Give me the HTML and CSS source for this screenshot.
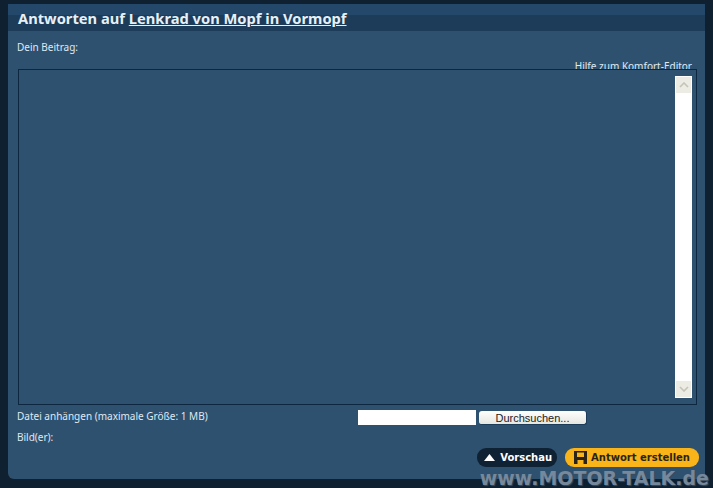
FILE: index.html
```html
<!DOCTYPE html>
<html lang="de">
<head>
  <meta charset="UTF-8">
  <title>Antworten</title>
  <link rel="stylesheet" href="styles.css">
</head>
<body>
  <div class="panel">
    <h1 class="panel-title">Antworten auf <a href="#">Lenkrad von Mopf in Vormopf</a></h1>
    <div class="panel-body">
      <div class="label">Dein Beitrag:</div>
      <div class="help-row"><a href="#">Hilfe zum Komfort-Editor</a></div>
      <div class="editor">
        <div class="scrollbar">
          <div class="scroll-btn">
            <svg width="10" height="6" viewBox="0 0 10 6"><path d="M1 5 L5 1 L9 5" fill="none" stroke="#c4c4b8" stroke-width="1.6"/></svg>
          </div>
          <div class="scroll-btn">
            <svg width="10" height="6" viewBox="0 0 10 6"><path d="M1 1 L5 5 L9 1" fill="none" stroke="#c4c4b8" stroke-width="1.6"/></svg>
          </div>
        </div>
      </div>
      <div class="upload-row">
        <span>Datei anhängen (maximale Größe: 1 MB)</span>
        <div class="file-picker">
          <div class="file-input"></div>
          <div class="file-btn">Durchsuchen...</div>
        </div>
      </div>
      <div class="label images">Bild(er):</div>
      <div class="actions">
        <a class="btn btn-dark" href="#">
          <svg width="11" height="7" viewBox="0 0 11 7"><path d="M5.5 0 L11 7 H0 Z" fill="#fff"/></svg>
          Vorschau
        </a>
        <a class="btn btn-yellow" href="#">
          <svg width="13" height="13" viewBox="0 0 13 13"><path d="M0 0 H13 V13 H0 Z M3 1.5 V6 H10 V1.5 Z M3.5 9 V13 H9.5 V9 Z" fill="#2a2418" fill-rule="evenodd"/></svg>
          Antwort erstellen
        </a>
      </div>
    </div>
  </div>
  <div class="watermark">www.MOTOR-TALK.de</div>
</body>
</html>
```

FILE: styles.css
```css
body, html {
  margin: 0;
  padding: 0;
  height: 100%;
}

body {
  background-color: #0f2031;
  font-family: "Noto Sans", sans-serif;
  font-size: 10px;
  color: #dfe9f2;
  overflow: hidden;
  padding: 4px 8px 9px 8px;
  box-sizing: border-box;
  position: relative;
}

.panel {
  height: 100%;
  background-color: #2f5170;
  border-radius: 0 0 0 6px;
  display: flex;
  flex-direction: column;
}

/* Title bar */
.panel-title {
  margin: 0;
  height: 27px;
  box-sizing: border-box;
  padding: 6px 0 0 10px;
  background: linear-gradient(#24486a 0%, #24486a 40%, #1c3c59 42%, #1c3c59 100%);
  font-family: "Noto Sans", sans-serif;
  font-size: 14.7px;
  line-height: 16px;
  font-weight: bold;
  color: #e6f0f8;
}

.panel-title a {
  color: #e6f0f8;
}

.panel-body {
  flex: 1;
  display: flex;
  flex-direction: column;
  padding: 10px 8px 0 9px;
}

.label {
  line-height: 13px;
}

.help-row {
  text-align: right;
  margin-top: 6px;
  height: 9px;
  line-height: 13px;
  padding-right: 5px;
}

.help-row a {
  color: #dfe9f2;
  text-decoration: none;
}

/* Editor */
.editor {
  position: relative;
  height: 322px;
  margin-left: 1px;
  background-color: #2f5170;
  border: 1px solid #0e2740;
  display: flex;
  justify-content: flex-end;
  padding: 6px 4px;
}

.scrollbar {
  width: 17px;
  background-color: #fff;
  display: flex;
  flex-direction: column;
  justify-content: space-between;
}

.scroll-btn {
  height: 16px;
  background-color: #ecebe4;
  display: flex;
  align-items: center;
  justify-content: center;
  margin: 1px;
}

.upload-row {
  display: flex;
  justify-content: space-between;
  line-height: 13px;
  margin-top: 5px;
}

.file-picker {
  display: flex;
  gap: 3px;
  margin-right: 110px;
}

.file-input {
  width: 118px;
  height: 15px;
  background-color: #fff;
}

.file-btn {
  width: 107px;
  height: 13px;
  margin-top: 1px;
  background: linear-gradient(#fff, #e6e6e0);
  border-right: 1px solid #1c3c59;
  border-bottom: 1px solid #1c3c59;
  border-radius: 3px;
  font-family: "Liberation Sans", sans-serif;
  font-size: 11px;
  color: #222;
  text-align: center;
  line-height: 14px;
}

.images {
  margin-top: 6px;
}

/* Buttons */
.actions {
  display: flex;
  justify-content: flex-end;
  gap: 8px;
  margin: 4px -2px 0 0;
}

.btn {
  display: flex;
  align-items: center;
  height: 19px;
  border-radius: 9px;
  font-family: "DejaVu Sans", sans-serif;
  font-size: 10px;
  font-weight: bold;
  text-decoration: none;
}

.btn-dark {
  gap: 5px;
  background-color: #0f2234;
  color: #fff;
  padding: 0 5px 0 7px;
}

.btn-yellow {
  gap: 4px;
  background-color: #f8b418;
  color: #2a2418;
  padding: 0 9px;
}

/* Watermark over the corner of the shot */
.watermark {
  position: absolute;
  right: 4px;
  bottom: 1px;
  font-family: "DejaVu Sans", sans-serif;
  font-size: 19px;
  line-height: 18px;
  font-weight: bold;
  color: #75889c;
  text-shadow: 1px 1px 1px #3b4a5a;
}
```
